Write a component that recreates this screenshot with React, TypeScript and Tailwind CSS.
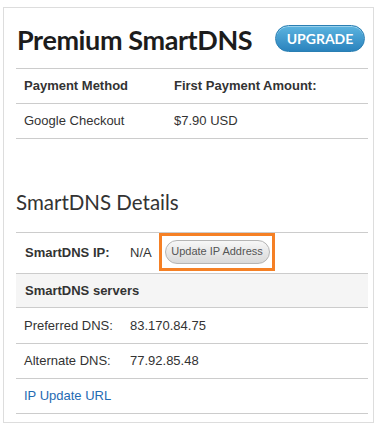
import React from "react";

const rowLine = "border-b border-[#cccccc]";

const App: React.FC = () => {
  return (
    <div className="w-[377px] h-[429px] bg-white pt-[7px] pl-[3px]">
      <div className="w-[371px] h-[416px] border border-[#dddddd] bg-white pl-[12px] pr-[5px] font-['Liberation_Sans',Arial,sans-serif] text-[13px] text-[#333333]">
        {/* Title */}
        <div className="flex items-center justify-between h-[60px] pr-[3px]">
          <h1 className="font-['Lato',sans-serif] text-[27px] font-bold tracking-[-0.4px] whitespace-nowrap text-[#1c1c1c] leading-none pl-[1px] pt-[2px]">
            Premium SmartDNS
          </h1>
          <button className="shrink-0 w-[90px] h-[27px] rounded-full border border-[#2a7fb3] bg-gradient-to-b from-[#5bb4e0] to-[#2a83bd] text-white text-[14px] font-bold font-['Lato',sans-serif] shadow-[inset_0_1px_0_rgba(255,255,255,0.4)]">
            UPGRADE
          </button>
        </div>

        {/* Payment table */}
        <div className="border-t border-[#cccccc]">
          <div className={`flex h-[35px] items-center font-bold ${rowLine}`}>
            <span className="w-[158px] pl-[8px]">Payment Method</span>
            <span>First Payment Amount:</span>
          </div>
          <div className={`flex h-[35px] items-center ${rowLine}`}>
            <span className="w-[158px] pl-[8px]">Google Checkout</span>
            <span>$7.90 USD</span>
          </div>
        </div>

        {/* Details */}
        <h2 className="font-['Lato',sans-serif] text-[20.5px] text-[#333333] mt-[53px] h-[40px] leading-none">
          SmartDNS Details
        </h2>
        <div className="border-t border-[#cccccc]">
          <div className={`flex h-[41px] items-center ${rowLine}`}>
            <span className="w-[114px] pl-[9px] font-bold">SmartDNS IP:</span>
            <span className="w-[29px]">N/A</span>
            <div className="border-[3px] border-[#f58025] h-[38px] w-[116px] -mt-[3px] flex items-center justify-center">
              <button className="h-[24px] w-[105px] rounded-full border border-[#b5b5b5] bg-gradient-to-b from-[#f7f7f7] to-[#d9d9d9] text-[11px] text-[#555555]">
                Update IP Address
              </button>
            </div>
          </div>
          <div className={`flex h-[34px] items-center font-bold bg-[#f5f5f5] pl-[9px] ${rowLine}`}>
            SmartDNS servers
          </div>
          <div className={`flex h-[36px] items-center ${rowLine}`}>
            <span className="w-[114px] pl-[8px]">Preferred DNS:</span>
            <span>83.170.84.75</span>
          </div>
          <div className={`flex h-[35px] items-center ${rowLine}`}>
            <span className="w-[114px] pl-[8px]">Alternate DNS:</span>
            <span>77.92.85.48</span>
          </div>
          <div className={`flex h-[35px] items-center ${rowLine}`}>
            <a className="pl-[8px] text-[#1f6bb3]" href="#">
              IP Update URL
            </a>
          </div>
        </div>
      </div>
    </div>
  );
};

export default App;
